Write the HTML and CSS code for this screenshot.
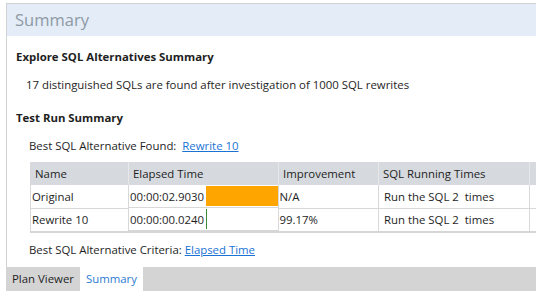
FILE: index.html
```html
<!DOCTYPE html>
<html lang="en">
<head>
<meta charset="UTF-8" />
<title>Summary</title>
<link rel="stylesheet" href="styles.css">
</head>
<body>
  <div class="panel">
    <div class="panel-head">Summary</div>

    <div class="content">
      <h2 class="section-title">Explore SQL Alternatives Summary</h2>
      <p class="line indent-wide">17 distinguished SQLs are found after investigation of 1000 SQL rewrites</p>

      <h2 class="section-title second">Test Run Summary</h2>
      <p class="line indent">Best SQL Alternative Found:&nbsp; <a href="#">Rewrite 10</a></p>

      <div class="grid-wrap">
        <table class="grid">
          <thead>
            <tr>
              <th class="c-name">Name</th>
              <th class="c-time">Elapsed Time</th>
              <th class="c-imp">Improvement</th>
              <th class="c-run">SQL Running Times</th>
              <th class="c-extra"></th>
            </tr>
          </thead>
          <tbody>
            <tr>
              <td>Original</td>
              <td class="time-cell"><span class="time">00:00:02.9030</span><span class="bar" style="width:73px"></span></td>
              <td>N/A</td>
              <td class="run">Run the SQL 2&nbsp; times</td>
              <td></td>
            </tr>
            <tr>
              <td>Rewrite 10</td>
              <td class="time-cell"><span class="time">00:00:00.0240</span><span class="bar best" style="width:1px"></span></td>
              <td>99.17%</td>
              <td class="run">Run the SQL 2&nbsp; times</td>
              <td></td>
            </tr>
          </tbody>
        </table>
      </div>

      <p class="line indent criteria">Best SQL Alternative Criteria: <a href="#">Elapsed Time</a></p>
    </div>
  </div>

  <div class="tabs">
    <span class="tab">Plan Viewer</span>
    <span class="tab active">Summary</span>
  </div>
</body>
</html>
```

FILE: styles.css
```css
* {
  box-sizing: border-box;
}

body {
  margin: 0;
  background: #fff;
  font-family: 'Open Sans', 'Noto Sans', sans-serif;
  font-size: 11.4px;
  color: #1e1e1e;
  overflow: hidden;
}

.panel {
  margin: 3px 0 0 6px;
  border-top: 1px solid #d2d2d2;
  border-left: 1px solid #d2d2d2;
  height: 264px;
  overflow: hidden;
}

.panel-head {
  height: 32px;
  background: #e3ecf7;
  color: #8e99a4;
  font-size: 16.5px;
  line-height: 32px;
  padding-left: 8px;
}

.content {
  padding-top: 13px;
}

.section-title {
  margin: 0 0 12px 9px;
  font-size: 11.4px;
  font-weight: 700;
  line-height: 16px;
}

.section-title.second {
  margin-top: 17px;
}

.line {
  margin: 0;
  line-height: 16px;
}

.indent-wide {
  padding-left: 19px;
}

.indent {
  padding-left: 22px;
}

a {
  color: #1a73d4;
}

.grid-wrap {
  margin: 8px 0 0 23px;
  overflow: hidden;
}

.grid {
  border-collapse: collapse;
  width: 560px;
  table-layout: fixed;
  border-left: 1px solid #d8d8d8;
  border-bottom: 2px solid #d6d6d6;
}

.grid th {
  background: #d6dade;
  font-weight: 400;
  text-align: left;
  height: 23px;
  padding: 0 0 0 4px;
  border-right: 1px solid #e6e8ea;
}

.grid td {
  height: 23px;
  padding: 0 0 0 1px;
  border-right: 1px solid #d8d8d8;
  border-bottom: 1px solid #d8d8d8;
  white-space: nowrap;
}

.c-name { width: 98px; }
.c-time { width: 150px; }
.c-imp { width: 100px; }
.c-run { width: 151px; }

.grid td.run {
  padding-left: 5px;
}

.time-cell {
  display: flex;
  align-items: center;
  gap: 3px;
}

.time {
  width: 73px;
}

.bar {
  height: 20px;
  background: #ffa500;
}

.bar.best {
  background: #3a8a3a;
}

.criteria {
  margin-top: 9px;
}

.tabs {
  margin: 0 0 0 6px;
  height: 24px;
  background: #d4d4d4;
  display: flex;
  align-items: stretch;
}

.tab {
  padding: 0 6px;
  line-height: 24px;
  color: #1e1e1e;
}

.tab.active {
  background: #fff;
  color: #2b7bd0;
}
```
